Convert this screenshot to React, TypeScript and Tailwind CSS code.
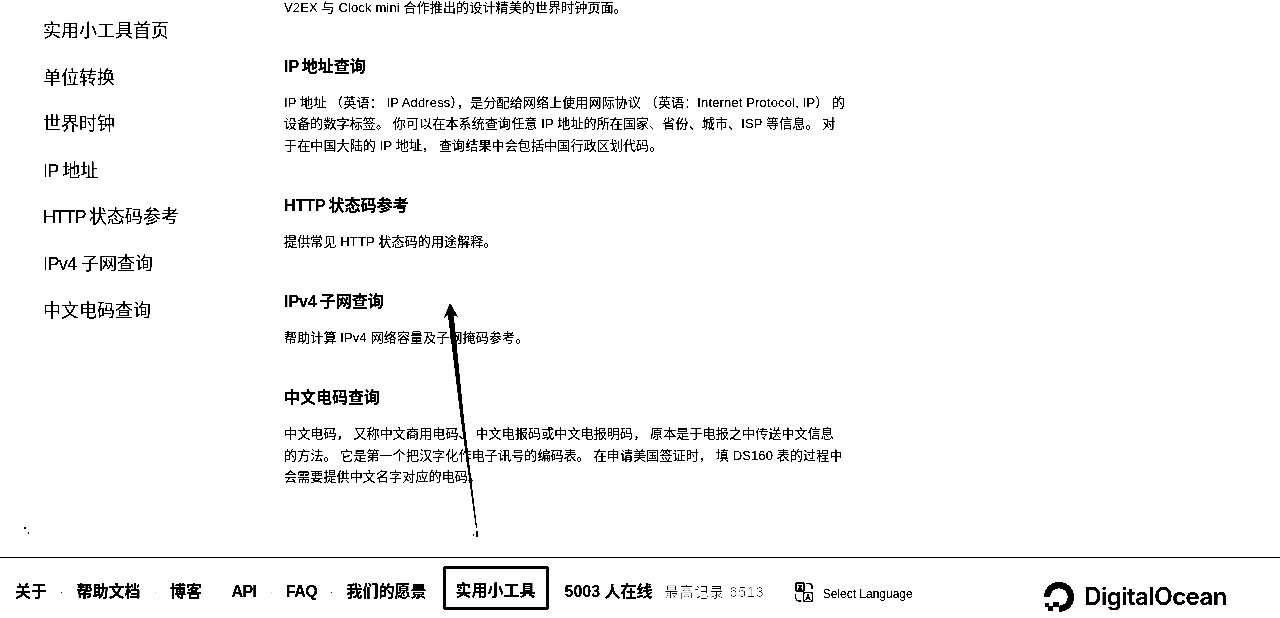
const sidebar: [string, string, string][] = [
  ["", "实用小工具首页", "tracking-normal"],
  ["", "单位转换", "tracking-normal"],
  ["", "世界时钟", "tracking-normal"],
  ["IP ", "地址", "tracking-[-0.8px]"],
  ["HTTP ", "状态码参考", "tracking-[-1.2px]"],
  ["IPv4 ", "子网查询", "tracking-[-0.6px]"],
  ["", "中文电码查询", "tracking-normal"],
];
const nav = ["关于", "帮助文档", "博客", "API", "FAQ", "我们的愿景"];
const font = { fontFamily: '"Liberation Sans", "Noto Sans CJK SC", sans-serif' };

function Section({ title, children, mt }: { title: string; children: React.ReactNode; mt: string }) {
  return (
    <section className={mt}>
      <h2 className="text-[16px] leading-[24px] font-bold text-black [word-spacing:-1.5px]">{title}</h2>
      <p className="mt-[13px] text-[13px] leading-[21.5px] tracking-[0.14px] text-black">{children}</p>
    </section>
  );
}

function LangIcon() {
  return (
    <svg width="20" height="22" viewBox="0 0 20 22" fill="none" stroke="#000" strokeWidth="1.300">
      <path d="M3 2h6a1 1 0 0 1 1 1v6a1 1 0 0 1-1 1H3a1 1 0 0 1-1-1V3a1 1 0 0 1 1-1z" />
      <path d="M4 4.500h4M7.500 4.500l-3 3.500M4 8h4" />
      <path d="M12 2.500h3a3 3 0 0 1 3 3v3" />
      <path d="M1.500 13v3a4 4 0 0 0 4 4h2" />
      <rect x="9.500" y="11.500" width="9" height="9" rx="1.500" />
      <path d="M12 19l2-5 2 5M12.800 17.300h2.400" />
    </svg>
  );
}

function OceanLogo() {
  return (
    <svg width="32" height="32" viewBox="0 0 32 32" fill="#000">
      <path d="M16 31v-6.200a8.800 8.800 0 1 0-8.800-8.800H1a15 15 0 1 1 15 15z" />
      <rect x="10" y="21" width="6" height="5" />
      <rect x="5.500" y="25.500" width="4.500" height="4.500" />
      <rect x="2" y="22" width="3.500" height="3.500" />
    </svg>
  );
}

export default function App() {
  return (
    <div className="relative flex h-[618px] w-[1280px] flex-col overflow-hidden bg-white text-black brightness-[0.82] contrast-[14] grayscale" style={font}>
      <main className="flex min-h-0 flex-1 overflow-hidden">
        <aside className="w-[284px] shrink-0 pl-[43px] pt-[18px]">
          <ul className="flex flex-col gap-[19.600px]">
            {sidebar.map(([latin, cjk, track]) => (
              <li key={cjk} className="text-[18px] leading-[27px] text-black">
                {latin && <span className={`whitespace-pre ${track}`}>{latin}</span>}
                {cjk}
              </li>
            ))}
          </ul>
        </aside>
        <article className="-mt-[3px] w-[566px] shrink-0">
          <p className="text-[13px] leading-[21.5px] tracking-[0.14px]">V2EX 与 Clock mini 合作推出的设计精美的世界时钟页面。</p>
          <Section title="IP 地址查询" mt="mt-[36px]">
            IP 地址 （英语： IP Address），是分配给网络上使用网际协议 （英语：Internet Protocol, IP） 的<br />
            设备的数字标签。 你可以在本系统查询任意 IP 地址的所在国家、省份、城市、ISP 等信息。 对<br />
            于在中国大陆的 IP 地址， 查询结果中会包括中国行政区划代码。
          </Section>
          <Section title="HTTP 状态码参考" mt="mt-[38px]">提供常见 HTTP 状态码的用途解释。</Section>
          <Section title="IPv4 子网查询" mt="mt-[37px]">帮助计算 IPv4 网络容量及子网掩码参考。</Section>
          <Section title="中文电码查询" mt="mt-[38px]">
            中文电码， 又称中文商用电码、 中文电报码或中文电报明码， 原本是于电报之中传送中文信息<br />
            的方法。 它是第一个把汉字化作电子讯号的编码表。 在申请美国签证时， 填 DS160 表的过程中<br />
            会需要提供中文名字对应的电码。
          </Section>
        </article>
      </main>

      <footer className="flex h-[61px] shrink-0 items-center border-t border-black pl-[15px] pt-[8px] text-[16px] font-bold">
        {nav.map((n, i) => (
          <div key={n} className="flex items-center">
            {i > 0 && <span className="w-[29.500px] text-center text-[10px] font-normal text-gray-500">·</span>}
            <span className={n === "API" || n === "FAQ" ? "tracking-[-0.6px]" : ""}>{n}</span>
          </div>
        ))}
        <span className="mb-[8px] ml-[16px] flex h-[44px] w-[106px] items-center justify-center rounded-[3px] border-[3px] border-black pt-[5px]">实用小工具</span>
        <span className="ml-[16px]">5003 人在线</span>
        <span className="ml-[12px] text-[14px] font-normal tracking-[1px] text-[#888888]">最高记录 6513</span>
        <span className="ml-[29px] flex items-center gap-[9px]">
          <LangIcon />
          <span className="pt-[3px] text-[12px] font-normal">Select Language</span>
        </span>
        <span className="ml-auto mr-[53px] mt-[10px] flex items-center gap-[9px]">
          <OceanLogo />
          <span className="text-[24px] leading-none font-semibold tracking-[-0.5px]" style={{ fontFamily: "Inter, sans-serif" }}>DigitalOcean</span>
        </span>
      </footer>

      <svg className="pointer-events-none absolute left-0 top-0" width="1280" height="618" fill="#000">
        <polygon points="450,303 458,317 453.600,315 464,420 477,528 476,528 461,420 448,315 444,318" />
        <path d="M477 531v6M473 535h1M476 535h1" stroke="#000" fill="none" />
        <path d="M25 527v2M28 533h1" stroke="#000" fill="none" />
      </svg>
    </div>
  );
}
